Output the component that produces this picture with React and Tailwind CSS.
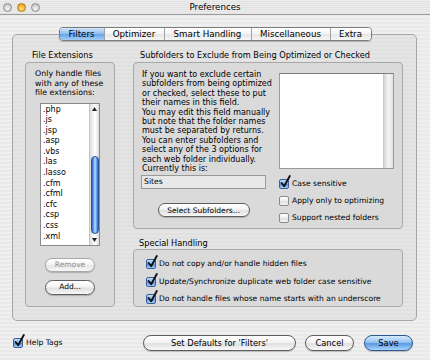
import { useState } from 'react'

const tabs = [
  { label: 'Filters', w: 'w-[44px]' },
  { label: 'Optimizer', w: 'w-[60px]' },
  { label: 'Smart Handling', w: 'w-[87px]' },
  { label: 'Miscellaneous', w: 'w-[79px]' },
  { label: 'Extra', w: 'w-[41px]' },
]

const extensions = ['.php', '.js', '.jsp', '.asp', '.vbs', '.las', '.lasso', '.cfm', '.cfml', '.cfc', '.csp', '.css', '.xml']

const infoLines = [
  'If you want to exclude certain',
  'subfolders from being optimized',
  'or checked, select these to put',
  'their names in this field.',
  'You may edit this field manually',
  'but note that the folder names',
  'must be separated by returns.',
  'You can enter subfolders and',
  'select any of the 3 options for',
  'each web folder individually.',
  'Currently this is:',
]

function Check({ on, onClick }) {
  return (
    <span className="relative inline-block w-[10px] h-[10px] shrink-0" onClick={onClick}>
      <span
        className={
          on
            ? 'absolute inset-0 rounded-[2px] border border-[#3b5f98] bg-[linear-gradient(180deg,#c4ddf9_0%,#7fb2ec_48%,#4f8fe2_52%,#a6cff8_100%)]'
            : 'absolute inset-0 rounded-[2px] border border-[#8c8c8c] bg-[linear-gradient(180deg,#ffffff_0%,#f0f0f0_48%,#dedede_52%,#f6f6f6_100%)]'
        }
      />
      {on && (
        <svg className="absolute left-[1px] top-[-4px]" width="11" height="13" viewBox="0 0 11 13">
          <path d="M1.6 8 L4.2 11.2 L9.8 1" stroke="#111" strokeWidth="1.9" fill="none" strokeLinecap="round" strokeLinejoin="round" />
        </svg>
      )}
    </span>
  )
}

function CheckRow({ label, on, onToggle }) {
  return (
    <div className="flex items-center gap-[3px] h-[12px] text-[7.6px] leading-[12px] whitespace-nowrap">
      <Check on={on} onClick={onToggle} />
      <span>{label}</span>
    </div>
  )
}

function AquaButton({ children, className, blue, disabled }) {
  let look = 'border-[#5e5e5e] bg-[linear-gradient(180deg,#ffffff_0%,#f4f4f4_45%,#e0e0e0_55%,#f8f8f8_100%)]'
  if (blue) look = 'border-[#2e5896] bg-[linear-gradient(180deg,#d6e9fd_0%,#98c4f3_45%,#5a99e6_55%,#a9d6fc_100%)]'
  if (disabled) look = 'border-[#a8a8a8] text-[#8e8e8e] bg-[linear-gradient(180deg,#ffffff_0%,#f4f4f4_45%,#e6e6e6_55%,#f8f8f8_100%)]'
  return (
    <div className={`flex items-center justify-center whitespace-nowrap rounded-full border shadow-[0_1px_1px_rgba(0,0,0,0.2)] ${look} ${className}`}>
      {children}
    </div>
  )
}

function Light({ orange }) {
  return (
    <span
      className={
        orange
          ? 'w-[9px] h-[9px] rounded-full border border-[#b57a14] bg-[radial-gradient(circle_at_50%_70%,#ffe08a_0%,#f6b437_55%,#d98e12_100%)]'
          : 'w-[9px] h-[9px] rounded-full border border-[#8e8e8e] bg-[radial-gradient(circle_at_50%_70%,#f4f4f4_0%,#d2d2d2_60%,#b4b4b4_100%)]'
      }
    />
  )
}

export default function App() {
  const [checks, setChecks] = useState({
    caseSensitive: true,
    applyOnly: false,
    nested: false,
    hidden: true,
    sync: true,
    underscore: true,
    help: true,
  })
  const toggle = (k) => setChecks({ ...checks, [k]: !checks[k] })

  return (
    <div className="w-[430px] h-[360px] overflow-hidden text-black font-['DejaVu_Sans',sans-serif] bg-[repeating-linear-gradient(180deg,#efefef_0px,#efefef_2px,#e9e9e9_2px,#e9e9e9_4px)]">
      {/* title bar */}
      <div className="h-[15px] grid grid-cols-[1fr_auto_1fr] items-center border-b border-[#9c9c9c] bg-[repeating-linear-gradient(180deg,#ececec_0px,#ececec_1px,#e2e2e2_1px,#e2e2e2_2px)]">
        <div className="flex items-center gap-[5px] pl-[3px]">
          <Light />
          <Light orange />
          <Light />
        </div>
        <span className="text-[8.7px] leading-none">Preferences</span>
        <div />
      </div>

      <div className="px-[12px] pt-[12px]">
        {/* tabs */}
        <div className="relative z-10 flex justify-center">
          <div className="flex rounded-[4px] border border-[#7c7c7c] overflow-hidden shadow-[0_1px_1px_rgba(0,0,0,0.2)]">
            {tabs.map((t, i) => (
              <div
                key={t.label}
                className={`${t.w} h-[12px] flex items-center justify-center text-[8.7px] leading-none ${i > 0 ? 'border-l border-[#a3a3a3]' : ''} ${
                  i === 0
                    ? 'bg-[linear-gradient(180deg,#d2e6fc_0%,#8fbef1_48%,#69a5ea_52%,#a3cdf6_100%)]'
                    : 'bg-[linear-gradient(180deg,#ffffff_0%,#f5f5f5_48%,#e6e6e6_52%,#f6f6f6_100%)]'
                }`}
              >
                {t.label}
              </div>
            ))}
          </div>
        </div>

        {/* tab panel */}
        <div className="-mt-[7px] w-[405px] h-[287px] rounded-[5px] border border-[#a6a6a6] bg-[repeating-linear-gradient(180deg,#e5e5e5_0px,#e5e5e5_2px,#e0e0e0_2px,#e0e0e0_4px)] flex gap-[18px] pl-[12px] pt-[15px]">
          {/* file extensions */}
          <div className="w-[90px]">
            <div className="h-[10px] pl-[7px] text-[8.2px] leading-[10px] whitespace-nowrap">File Extensions</div>
            <div className="mt-[2px] h-[245px] rounded-[4px] border border-[#a9a9a9] bg-[#dadada] flex flex-col items-center pt-[6px]">
              <div className="self-start pl-[9px] text-[7.9px] leading-[9.5px] whitespace-nowrap">
                Only handle files
                <br />
                with any of these
                <br />
                file extensions:
              </div>
              <div className="mt-[5px] w-[60px] h-[143px] border border-[#8a8a8a] bg-white flex">
                <div className="flex-1 pl-[2px] pt-[1px] text-[8px] leading-[10.6px]">
                  {extensions.map((e) => (
                    <div key={e}>{e}</div>
                  ))}
                </div>
                <div className="w-[10px] flex flex-col bg-[linear-gradient(90deg,#dcdcdc,#fafafa_45%,#ffffff_60%,#d8d8d8)] border-l border-[#c4c4c4]">
                  <div className="h-[10px] flex items-center justify-center">
                    <svg width="5" height="4" viewBox="0 0 5 4">
                      <path d="M2.5 0 L5 4 L0 4 Z" fill="#222" />
                    </svg>
                  </div>
                  <div className="flex-1 flex flex-col items-center">
                    <div className="h-[42px]" />
                    <div className="w-[8px] h-[78px] rounded-full border border-[#2a5294] bg-[linear-gradient(90deg,#2f63c0_0%,#6ea8ee_30%,#b9dcff_50%,#6aa6ee_75%,#2f63c0_100%)]" />
                  </div>
                  <div className="h-[10px] flex items-center justify-center">
                    <svg width="5" height="4" viewBox="0 0 5 4">
                      <path d="M0 0 L5 0 L2.5 4 Z" fill="#222" />
                    </svg>
                  </div>
                </div>
              </div>
              <AquaButton disabled className="mt-[12px] w-[50px] h-[14px] text-[7.5px]">Remove</AquaButton>
              <AquaButton className="mt-[8px] w-[50px] h-[15px] text-[7.5px]">Add...</AquaButton>
            </div>
          </div>

          {/* right side */}
          <div className="w-[270px]">
            <div className="h-[10px] pl-[7px] text-[8.2px] leading-[10px] whitespace-nowrap">Subfolders to Exclude from Being Optimized or Checked</div>
            <div className="mt-[2px] h-[167px] rounded-[4px] border border-[#a9a9a9] bg-[#dadada] flex gap-[13px] pl-[7px] pt-[7px]">
              <div className="w-[125px] flex flex-col">
                <div className="pl-[1px] text-[8px] leading-[9.4px] whitespace-nowrap">
                  {infoLines.map((l) => (
                    <div key={l}>{l}</div>
                  ))}
                </div>
                <div className="mt-[2px] h-[14px] border border-[#9a9a9a] bg-[#e8e8e8] pl-[2px] text-[7.7px] leading-[12px]">Sites</div>
                <AquaButton className="mt-[14px] self-center w-[92px] h-[14px] text-[7.5px]">Select Subfolders...</AquaButton>
              </div>
              <div className="w-[115px] mt-[3px] flex flex-col">
                <div className="h-[96px] border border-[#9a9a9a] border-t-[#7e7e7e] bg-white flex justify-end">
                  <div className="w-[10px] bg-[linear-gradient(90deg,#d6d6d6,#f4f4f4_50%,#e2e2e2)] border-l border-[#c8c8c8]" />
                </div>
                <div className="mt-[9px] flex flex-col gap-[5px]">
                  <CheckRow label="Case sensitive" on={checks.caseSensitive} onToggle={() => toggle('caseSensitive')} />
                  <CheckRow label="Apply only to optimizing" on={checks.applyOnly} onToggle={() => toggle('applyOnly')} />
                  <CheckRow label="Support nested folders" on={checks.nested} onToggle={() => toggle('nested')} />
                </div>
              </div>
            </div>

            <div className="mt-[9px] h-[10px] pl-[6px] text-[8.2px] leading-[10px]">Special Handling</div>
            <div className="mt-[1px] h-[58px] rounded-[4px] border border-[#a9a9a9] bg-[#dadada] flex flex-col gap-[5.5px] pl-[12px] pt-[8px]">
              <CheckRow label="Do not copy and/or handle hidden files" on={checks.hidden} onToggle={() => toggle('hidden')} />
              <CheckRow label="Update/Synchronize duplicate web folder case sensitive" on={checks.sync} onToggle={() => toggle('sync')} />
              <CheckRow label="Do not handle files whose name starts with an underscore" on={checks.underscore} onToggle={() => toggle('underscore')} />
            </div>
          </div>
        </div>

        {/* bottom bar */}
        <div className="mt-[14px] h-[16px] flex items-center justify-between pl-[1px] pr-[5px]">
          <CheckRow label="Help Tags" on={checks.help} onToggle={() => toggle('help')} />
          <div className="flex items-center">
            <AquaButton className="w-[153px] h-[16px] text-[8.3px]">Set Defaults for 'Filters'</AquaButton>
            <AquaButton className="ml-[9px] w-[49px] h-[16px] text-[8.3px]">Cancel</AquaButton>
            <AquaButton blue className="ml-[10px] w-[49px] h-[16px] text-[8.3px]">Save</AquaButton>
          </div>
        </div>
      </div>
    </div>
  )
}
